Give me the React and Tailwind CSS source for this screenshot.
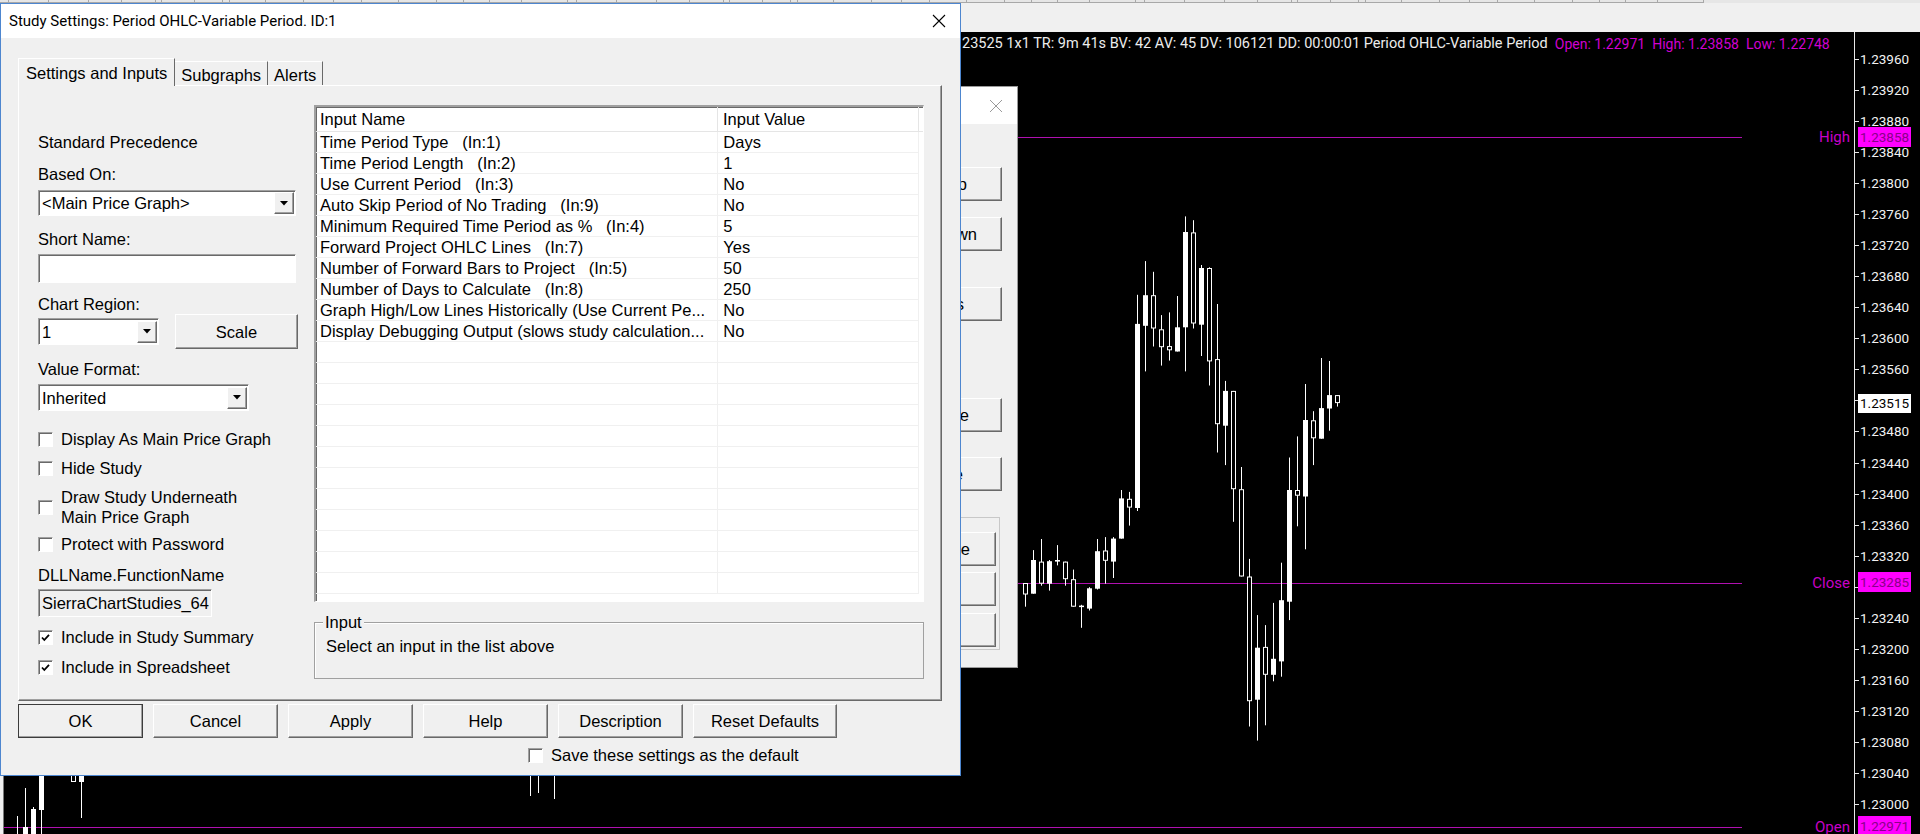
import React from "react";

const RAISED =
  "border border-t-white border-l-white border-r-[#696969] border-b-[#696969] shadow-[inset_-1px_-1px_0_#a0a0a0]";
const SUNKEN =
  "border border-t-[#a0a0a0] border-l-[#a0a0a0] border-r-white border-b-white shadow-[inset_1px_1px_0_#696969]";

// [type, bodyTop, bodyBottom, wickTop, wickBottom], x = 1025 + 8 * i
const CANDLES = [
  ["h", 583, 594.5, 583, 606.7],
  ["f", 560, 593.7, 550.1, 593.7],
  ["h", 561.6, 583.7, 539, 585.7],
  ["f", 561.2, 583.7, 560, 590.6],
  ["f", 560, 561.6, 545.1, 565.4],
  ["h", 561.6, 579.2, 561.6, 585.7],
  ["h", 579.2, 606.7, 569.6, 606.7],
  ["f", 605.6, 606.7, 604.8, 627.8],
  ["f", 588.3, 608.6, 587.2, 610.5],
  ["f", 551.2, 588.7, 539, 589.5],
  ["h", 550.5, 560.8, 537.1, 583.7],
  ["f", 538.6, 561.6, 537.1, 578],
  ["f", 498.4, 538.6, 490, 538.6],
  ["h", 498.8, 507.6, 491.9, 525.6],
  ["f", 323.9, 508, 294.8, 511],
  ["f", 295.2, 325.8, 261.1, 371.4],
  ["h", 295.2, 328.5, 271.8, 346.5],
  ["h", 329.3, 347.2, 315.1, 365.6],
  ["h", 346.1, 350.3, 312.4, 360.6],
  ["f", 327.3, 351.5, 296, 351.5],
  ["f", 232, 327.3, 216.4, 371.4],
  ["h", 232.4, 323.5, 220.2, 328.5],
  ["f", 268, 324.7, 265, 356],
  ["h", 268, 361.4, 267.3, 385.5],
  ["h", 359.1, 424.2, 304, 452.5],
  ["f", 390.9, 425.7, 380.9, 465.1],
  ["h", 390.9, 489.2, 390.9, 521.8],
  ["h", 489.2, 576.5, 467, 576.5],
  ["h", 576.5, 701.2, 558.9, 726.5],
  ["f", 647.7, 699.7, 615.1, 740.6],
  ["h", 646.9, 674.8, 625.1, 725.3],
  ["f", 658.8, 674.8, 602.9, 681.3],
  ["f", 600.2, 661.4, 562.7, 676.7],
  ["f", 490, 601.7, 457.5, 620.1],
  ["h", 490, 495.7, 436.4, 526.3],
  ["f", 420, 496.5, 384, 549.3],
  ["h", 420.3, 438.3, 411.2, 465.1],
  ["f", 408.1, 438.7, 358, 438.7],
  ["f", 395.1, 408.5, 361, 430.7],
  ["h", 395.1, 403.1, 395.1, 406.6],
];

const INPUTS = [
  ["Time Period Type   (In:1)", "Days"],
  ["Time Period Length   (In:2)", "1"],
  ["Use Current Period   (In:3)", "No"],
  ["Auto Skip Period of No Trading   (In:9)", "No"],
  ["Minimum Required Time Period as %   (In:4)", "5"],
  ["Forward Project OHLC Lines   (In:7)", "Yes"],
  ["Number of Forward Bars to Project   (In:5)", "50"],
  ["Number of Days to Calculate   (In:8)", "250"],
  ["Graph High/Low Lines Historically (Use Current Pe...", "No"],
  ["Display Debugging Output (slows study calculation...", "No"],
];

// price scale: 1.23960 at y=59, 31.04px per 0.0004
const PRICES = Array.from({ length: 25 }, (_, i) => ({
  label: (1.2396 - i * 0.0004).toFixed(5),
  y: 59 + i * 31.04,
}));
// these two sit under the current-price and Close boxes
const HIDDEN = ["1.23520", "1.23280"];

const TOOLBAR = [9, 40, 40, 33, 34, 6, 33, 28, 7, 36, 38, 30, 28, 37, 38, 27, 26, 32, 46];

function Checkbox({ checked }) {
  return (
    <span className={`flex h-[15px] w-[15px] shrink-0 items-center justify-center bg-white ${SUNKEN}`}>
      {checked && (
        <svg width="11" height="11" viewBox="0 0 11 11">
          <path d="M2 5.5 L4.3 8 L9 2.8" fill="none" stroke="#000" strokeWidth="1.8" />
        </svg>
      )}
    </span>
  );
}

function CheckRow({ checked, children, className = "" }) {
  return (
    <div className={`flex items-center gap-[8px] ${className}`}>
      <Checkbox checked={checked} />
      <span className="leading-[20px]">{children}</span>
    </div>
  );
}

function Select({ value, className = "" }) {
  return (
    <div className={`flex items-center bg-white ${SUNKEN} ${className}`}>
      <span className="flex-1 truncate pl-[3px] leading-[20px]">{value}</span>
      <span className={`mr-[1px] flex h-[22px] w-[20px] items-center justify-center bg-[#f0f0f0] ${RAISED}`}>
        <svg width="8" height="5" viewBox="0 0 8 5">
          <path d="M0 0 H8 L4 4.5 Z" fill="#000" />
        </svg>
      </span>
    </div>
  );
}

function Button({ children, className = "", isDefault = false }) {
  return (
    <div
      className={`flex h-[34px] items-center justify-center bg-[#f0f0f0] leading-[20px] ${
        isDefault ? "outline outline-1 outline-[#3c3c3c] -outline-offset-1" : ""
      } ${RAISED} ${className}`}
    >
      {children}
    </div>
  );
}

function ChartWindow() {
  return (
    <div className="flex h-full w-full flex-col">
      <div className="h-[32px] bg-[#f0f0f0]">
        <div className="flex h-[3px] bg-[#e6e6e6]">
          {TOOLBAR.concat(TOOLBAR, TOOLBAR).map((w, i) => (
            <div key={i} style={{ width: w }} className="h-full border-r border-b border-[#a8a8a8]" />
          ))}
        </div>
      </div>
      <div className="ml-[3px] flex flex-1 border-l border-[#7a7a7a] bg-black">
        <div className="relative flex-1">
          <div className="flex h-[24px] items-center whitespace-nowrap pl-[958px] font-['Roboto',sans-serif] text-[14.5px] leading-[24px]">
            <span className="text-[#ececec]">
              23525 1x1 TR: 9m 41s BV: 42 AV: 45 DV: 106121 DD: 00:00:01 Period OHLC-Variable Period
            </span>
            <span className="ml-[7px] flex gap-[7px] text-[14px] text-[#d000d0]">
              <span>Open: 1.22971</span>
              <span>High: 1.23858</span>
              <span>Low: 1.22748</span>
            </span>
          </div>
          <span className="absolute right-[4px] top-[95px] font-['Roboto',sans-serif] text-[15px] leading-[20px] text-[#c800c8]">
            High
          </span>
          <span className="absolute right-[4px] top-[541px] font-['Roboto',sans-serif] text-[15px] leading-[20px] text-[#c800c8]">
            Close
          </span>
          <span className="absolute right-[4px] top-[785px] font-['Roboto',sans-serif] text-[15px] leading-[20px] text-[#c800c8]">
            Open
          </span>
        </div>
        <div className="relative w-[66px] border-l border-[#e8e8e8] font-['Roboto',sans-serif] text-[13.5px] leading-[20px] text-[#f2f2f2]">
          {PRICES.map((p) => (
            <React.Fragment key={p.label}>
              <div className="absolute left-0 h-[1px] w-[4px] bg-[#e8e8e8]" style={{ top: p.y - 32 }} />
              {!HIDDEN.includes(p.label) && (
                <span className="absolute left-[5px]" style={{ top: p.y - 32 - 10 }}>
                  {p.label}
                </span>
              )}
            </React.Fragment>
          ))}
          <span className="absolute left-[3px] top-[95px] h-[20px] w-[53px] bg-[#ff00ff] pl-[2px] text-[#8a008a]">
            1.23858
          </span>
          <span className="absolute left-[3px] top-[362px] h-[19px] w-[53px] bg-white pl-[2px] leading-[19px] text-black">
            1.23515
          </span>
          <span className="absolute left-[3px] top-[540px] h-[20px] w-[53px] bg-[#ff00ff] pl-[2px] text-[#8a008a]">
            1.23285
          </span>
          <span className="absolute left-[3px] top-[784px] h-[20px] w-[53px] bg-[#ff00ff] pl-[2px] text-[#8a008a]">
            1.22971
          </span>
        </div>
      </div>
    </div>
  );
}

function Candles() {
  return (
    <svg className="pointer-events-none absolute left-0 top-0" width="1920" height="834" viewBox="0 0 1920 834">
      <g stroke="#b010b0" strokeWidth="1">
        <line x1="4" y1="137.5" x2="1742" y2="137.5" />
        <line x1="4" y1="583.5" x2="1742" y2="583.5" />
        <line x1="4" y1="827.5" x2="1742" y2="827.5" />
      </g>
      {CANDLES.map(([type, bt, bb, wt, wb], i) => {
        const x = 1025 + 8 * i;
        return (
          <g key={i}>
            <line x1={x + 0.5} y1={wt} x2={x + 0.5} y2={wb} stroke="#fff" strokeWidth="1" />
            {type === "f" ? (
              <rect x={x - 2} y={bt} width="5" height={Math.max(bb - bt, 1.5)} fill="#fff" />
            ) : (
              <rect x={x - 1.5} y={bt + 0.5} width="4" height={Math.max(bb - bt - 1, 1)} fill="#000" stroke="#fff" strokeWidth="1" />
            )}
          </g>
        );
      })}
      <g stroke="#fff" strokeWidth="1">
        <line x1="17.5" y1="816" x2="17.5" y2="834" />
        <line x1="25.5" y1="788" x2="25.5" y2="834" />
        <line x1="33.5" y1="807" x2="33.5" y2="834" />
        <line x1="41.5" y1="770" x2="41.5" y2="834" />
        <line x1="81.5" y1="770" x2="81.5" y2="818" />
        <line x1="530.5" y1="770" x2="530.5" y2="796" />
        <line x1="538.5" y1="770" x2="538.5" y2="793" />
        <line x1="554.5" y1="770" x2="554.5" y2="799" />
      </g>
      <rect x="23" y="827" width="5" height="7" fill="#fff" />
      <rect x="31" y="809" width="5" height="25" fill="#fff" />
      <rect x="39" y="770" width="5" height="40" fill="#fff" />
      <rect x="71.5" y="770" width="4" height="11.5" fill="#000" stroke="#fff" />
      <rect x="79" y="770" width="5" height="12" fill="#fff" />
    </svg>
  );
}

function StudiesWindow() {
  return (
    <div className="absolute left-[780px] top-[86px] flex h-[582px] w-[238px] flex-col border border-[#9a9a9a] bg-[#f0f0f0] font-['Liberation_Sans',Arial,sans-serif] text-[16.5px] text-black">
      <div className="flex h-[37px] items-center justify-end bg-white pr-[14px]">
        <svg width="14" height="14" viewBox="0 0 14 14">
          <path d="M1 1 L13 13 M13 1 L1 13" stroke="#9a9a9a" strokeWidth="1" />
        </svg>
      </div>
      <div className="flex flex-col items-end pr-[15px]">
        <Button className="mt-[43px] w-[140px] justify-end pr-[34px]">Move Up</Button>
        <Button className="mt-[16px] w-[140px] justify-end pr-[24px]">Move Down</Button>
        <Button className="mt-[36px] w-[140px] justify-end pr-[37px]">Settings</Button>
        <Button className="mt-[77px] w-[140px] justify-end pr-[32px]">Save</Button>
        <Button className="mt-[25px] w-[140px] justify-end pr-[38px]">Delete</Button>
        <div className="mr-[2px] mt-[26px] flex h-[133px] w-[160px] flex-col items-end border border-[#c8c8c8] pr-[3px] pt-[14px]">
          <Button className="w-[140px] justify-end pr-[25px]">Save</Button>
          <Button className="mt-[6px] w-[140px] justify-end pr-[50px]">Load</Button>
          <Button className="mt-[7px] w-[140px] justify-end pr-[50px]">Clear</Button>
        </div>
      </div>
    </div>
  );
}

function SettingsPanel() {
  return (
    <div className="flex">
      <div className="w-[276px] pt-[46px]">
        <div className="h-[20px] leading-[20px]">Standard Precedence</div>
        <div className="mt-[12px] h-[20px] leading-[20px]">Based On:</div>
        <Select value="<Main Price Graph>" className="mt-[6px] h-[26px] w-[258px]" />
        <div className="mt-[13px] h-[20px] leading-[20px]">Short Name:</div>
        <div className={`mt-[5px] h-[29px] w-[258px] bg-white ${SUNKEN}`} />
        <div className="mt-[11px] h-[20px] leading-[20px]">Chart Region:</div>
        <div className="flex h-[35px] items-center">
          <Select value="1" className="h-[27px] w-[121px]" />
          <Button className="ml-[16px] h-[35px] w-[123px]">Scale</Button>
        </div>
        <div className="mt-[10px] h-[20px] leading-[20px]">Value Format:</div>
        <Select value="Inherited" className="mt-[5px] h-[27px] w-[211px]" />
        <CheckRow className="mt-[18px] h-[20px]">Display As Main Price Graph</CheckRow>
        <CheckRow className="mt-[9px] h-[20px]">Hide Study</CheckRow>
        <CheckRow className="mt-[9px] h-[40px]">
          Draw Study Underneath
          <br />
          Main Price Graph
        </CheckRow>
        <CheckRow className="mt-[7px] h-[20px]">Protect with Password</CheckRow>
        <div className="mt-[11px] h-[20px] leading-[20px]">DLLName.FunctionName</div>
        <div className={`mt-[4px] flex h-[28px] w-[174px] items-center overflow-hidden whitespace-nowrap bg-[#f0f0f0] pl-[3px] ${SUNKEN}`}>
          SierraChartStudies_64
        </div>
        <CheckRow checked className="mt-[10px] h-[20px]">Include in Study Summary</CheckRow>
        <CheckRow checked className="mt-[10px] h-[20px]">Include in Spreadsheet</CheckRow>
      </div>

      <div className="w-[610px] pt-[19px]">
        <div className={`h-[497px] overflow-hidden bg-white ${SUNKEN} border-t-2 border-l-2`}>
          <div className="flex h-[25px] border-b border-[#e5e5e5] leading-[24px]">
            <div className="w-[402px] border-r border-[#e5e5e5] pl-[4px]">Input Name</div>
            <div className="w-[201px] border-r border-[#e5e5e5] pl-[5px]">Input Value</div>
          </div>
          {Array.from({ length: 22 }, (_, i) => INPUTS[i] || ["", ""]).map(([name, value], i) => (
            <div key={i} className="flex h-[21px] w-[603px] border-r border-b border-[#f0f0f0] leading-[20px]">
              <div className="w-[402px] truncate whitespace-pre pl-[4px]">{name}</div>
              <div className="w-[201px] border-l border-[#f0f0f0] pl-[5px]">{value}</div>
            </div>
          ))}
        </div>
        <div className="relative mt-[20px] h-[57px] border border-[#a0a0a0] shadow-[inset_1px_1px_0_#ffffff]">
          <span className="absolute -top-[11px] left-[8px] bg-[#f0f0f0] px-[2px] leading-[20px]">Input</span>
          <div className="pl-[11px] pt-[13px] leading-[20px]">Select an input in the list above</div>
        </div>
      </div>
    </div>
  );
}

function StudySettingsDialog() {
  return (
    <div className="absolute left-0 top-[3px] flex h-[773px] w-[961px] flex-col border border-[#4d86cf] bg-[#f0f0f0] font-['Liberation_Sans',Arial,sans-serif] text-[16.5px] text-black">
      <div className="flex h-[34px] shrink-0 items-center justify-between bg-white pl-[8px] pr-[14px]">
        <span className="font-['Roboto',sans-serif] text-[15px]">Study Settings: Period OHLC-Variable Period. ID:1</span>
        <svg width="14" height="14" viewBox="0 0 14 14">
          <path d="M1 1 L13 13 M13 1 L1 13" stroke="#000" strokeWidth="1.1" />
        </svg>
      </div>

      <div className="relative z-10 mt-[20px] flex h-[28px] items-end pl-[17px]">
        <div className="flex h-[28px] items-center border-t border-l border-r border-t-white border-l-white border-r-[#696969] bg-[#f0f0f0] px-[7px] leading-[20px]">
          Settings and Inputs
        </div>
        <div className="mb-[1px] flex h-[24px] items-center border-t border-r border-t-white border-r-[#696969] px-[6px] pt-[2px] leading-[20px]">
          Subgraphs
        </div>
        <div className="mb-[1px] flex h-[24px] items-center border-t border-r border-t-white border-r-[#696969] px-[6px] pt-[2px] leading-[20px]">
          Alerts
        </div>
      </div>

      <div className="-mt-[1px] ml-[17px] h-[616px] w-[924px] border border-t-white border-l-white border-r-[#696969] border-b-[#696969] pl-[19px] shadow-[inset_-1px_-1px_0_#a0a0a0]">
        <SettingsPanel />
      </div>

      <div className="ml-[17px] mt-[3px] flex gap-[10px]">
        <Button isDefault className="w-[125px]">OK</Button>
        <Button className="w-[125px]">Cancel</Button>
        <Button className="w-[125px]">Apply</Button>
        <Button className="w-[125px]">Help</Button>
        <Button className="w-[125px]">Description</Button>
        <Button className="w-[144px]">Reset Defaults</Button>
      </div>

      <CheckRow className="ml-[527px] mt-[7px] h-[20px] gap-[7px]">Save these settings as the default</CheckRow>
    </div>
  );
}

export default function App() {
  return (
    <div className="relative h-[834px] w-[1920px] overflow-hidden bg-[#f0f0f0]">
      <ChartWindow />
      <Candles />
      <StudiesWindow />
      <StudySettingsDialog />
    </div>
  );
}
